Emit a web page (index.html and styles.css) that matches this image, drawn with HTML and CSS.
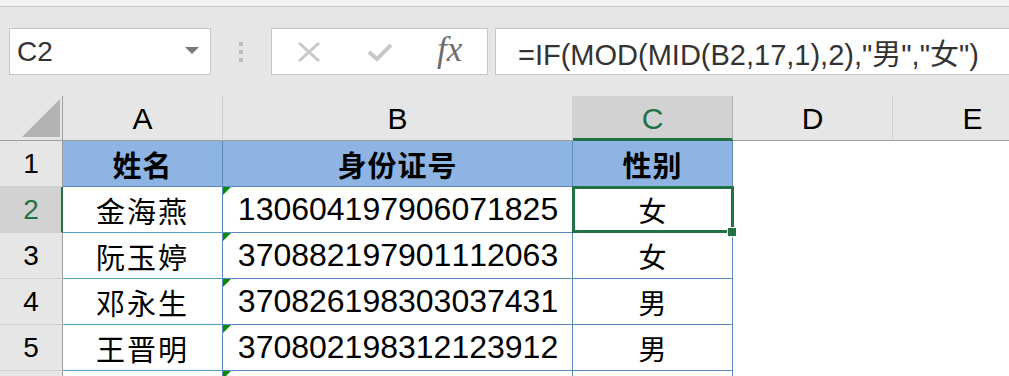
FILE: index.html
```html
<!DOCTYPE html>
<html lang="zh-CN">
<head>
  <meta charset="UTF-8" />
  <title>身份证号判断性别</title>
  <link rel="stylesheet" href="styles.css">
</head>
<body>

  <div class="top-strip"></div>

  <div class="formula-bar">
    <div class="name-box">
      <span>C2</span>
      <span class="caret"></span>
    </div>
    <div class="grip">
      <span></span>
      <span></span>
      <span></span>
    </div>
    <div class="buttons">
      <svg class="btn-icon" width="24" height="20" viewBox="0 0 24 20">
        <path d="M2 1 L22 19 M22 1 L2 19" stroke="#c8c8c8" stroke-width="3" fill="none"/>
      </svg>
      <svg class="btn-icon" width="26" height="20" viewBox="0 0 26 20">
        <path d="M2 10 L10 17 L24 3" stroke="#c8c8c8" stroke-width="4" fill="none"/>
      </svg>
      <span class="fx">fx</span>
    </div>
    <div class="formula-input">=IF(MOD(MID(B2,17,1),2),"男","女")</div>
  </div>

  <div class="sheet">
    <!-- column headers -->
    <div class="corner"><span class="corner-tri"></span></div>
    <div class="col-head">A</div>
    <div class="col-head">B</div>
    <div class="col-head active">C</div>
    <div class="col-head">D</div>
    <div class="col-head">E</div>

    <!-- row 1 -->
    <div class="row-head">1</div>
    <div class="cell title">姓名</div>
    <div class="cell title">身份证号</div>
    <div class="cell title">性别</div>
    <div class="blank"></div>
    <div class="blank"></div>

    <!-- row 2 -->
    <div class="row-head active">2</div>
    <div class="cell name">金海燕</div>
    <div class="cell id">130604197906071825</div>
    <div class="cell sex selected">女</div>
    <div class="blank"></div>
    <div class="blank"></div>

    <!-- row 3 -->
    <div class="row-head">3</div>
    <div class="cell name">阮玉婷</div>
    <div class="cell id">370882197901112063</div>
    <div class="cell sex">女</div>
    <div class="blank"></div>
    <div class="blank"></div>

    <!-- row 4 -->
    <div class="row-head">4</div>
    <div class="cell name">邓永生</div>
    <div class="cell id">370826198303037431</div>
    <div class="cell sex">男</div>
    <div class="blank"></div>
    <div class="blank"></div>

    <!-- row 5 -->
    <div class="row-head">5</div>
    <div class="cell name">王晋明</div>
    <div class="cell id">370802198312123912</div>
    <div class="cell sex">男</div>
    <div class="blank"></div>
    <div class="blank"></div>

    <!-- row 6, only its top edge shows -->
    <div class="row-head"></div>
    <div class="cell name"></div>
    <div class="cell id"></div>
    <div class="cell sex"></div>
    <div class="blank"></div>
    <div class="blank"></div>
  </div>

</body>
</html>
```

FILE: styles.css
```css
* {
  margin: 0;
  padding: 0;
  box-sizing: border-box;
}

body {
  width: 1009px;
  height: 376px;
  overflow: hidden;
  background: #ffffff;
  font-family: "Liberation Sans", Arial, "Noto Sans CJK SC", sans-serif;
  font-kerning: none;
}

.top-strip {
  height: 7px;
  background: #f3f3f3;
  border-bottom: 1px solid #c8c8c8;
}

/* formula bar */
.formula-bar {
  height: 89px;
  background: #e6e6e6;
  display: flex;
  align-items: flex-start;
  padding-top: 21px;
  padding-left: 9px;
  overflow: hidden;
}

.name-box {
  width: 202px;
  height: 47px;
  flex-shrink: 0;
  background: #fff;
  border: 1px solid #c6c6c6;
  display: flex;
  align-items: center;
  justify-content: space-between;
  padding: 0 11px 0 7px;
  font-size: 28px;
  color: #333;
}

.caret {
  width: 0;
  height: 0;
  border-left: 7px solid transparent;
  border-right: 7px solid transparent;
  border-top: 7px solid #7a7a7a;
  margin-top: -3px;
}

.grip {
  width: 60px;
  flex-shrink: 0;
  display: flex;
  flex-direction: column;
  align-items: center;
  gap: 4px;
  padding-top: 14px;
}

.grip span {
  width: 4px;
  height: 4px;
  background: #bdbdbd;
}

.buttons {
  width: 217px;
  height: 47px;
  flex-shrink: 0;
  background: #fff;
  border: 1px solid #c6c6c6;
  display: flex;
  align-items: center;
  padding-left: 25px;
  gap: 46px;
}

.fx {
  font-family: "Liberation Serif", "Times New Roman", serif;
  font-style: italic;
  font-size: 35px;
  color: #6d6d6d;
  margin-left: -2px;
  margin-top: -3px;
}

.formula-input {
  margin-left: 7px;
  width: 560px;
  height: 47px;
  flex-shrink: 0;
  background: #fff;
  border: 1px solid #c6c6c6;
  display: flex;
  align-items: center;
  padding-left: 22px;
  font-size: 29px;
  color: #333;
  white-space: nowrap;
}

/* sheet grid */
.sheet {
  display: grid;
  grid-template-columns: 63px 160px 350px 160px 160px 160px;
  grid-template-rows: 45px repeat(6, 46px);
  width: 1053px;
}

.corner {
  background: #e6e6e6;
  border-right: 1px solid #9e9e9e;
  border-bottom: 1px solid #9e9e9e;
  display: flex;
  align-items: flex-end;
  justify-content: flex-end;
  padding: 0 2px 3px 0;
}

.corner-tri {
  width: 38px;
  height: 38px;
  background: #b3b3b3;
  clip-path: polygon(100% 0, 100% 100%, 0 100%);
}

.col-head {
  background: #e6e6e6;
  border-right: 1px solid #d0d0d0;
  border-bottom: 1px solid #9e9e9e;
  display: flex;
  align-items: center;
  justify-content: center;
  font-size: 30px;
  color: #000;
  padding-top: 2px;
}

.col-head.active {
  background: #d2d2d2;
  color: #217346;
  border-bottom: 3px solid #217346;
  border-right-color: #b0b0b0;
  padding-top: 4px;
}

.row-head {
  background: #e6e6e6;
  border-right: 1px solid #9e9e9e;
  border-bottom: 1px solid #cfcfcf;
  display: flex;
  align-items: center;
  justify-content: center;
  font-size: 28px;
  color: #000;
}

.row-head.active {
  background: #d2d2d2;
  color: #217346;
  border-right: 2px solid #217346;
  padding-left: 1px;
}

.cell {
  position: relative;
  background: #fff;
  border-right: 1px solid #5b8ac0;
  border-bottom: 1px solid #5b8ac0;
  display: flex;
  align-items: center;
  justify-content: center;
  color: #000;
}

.cell.title {
  background: #8eb4e3;
  font-family: "Noto Sans CJK SC", sans-serif;
  font-weight: bold;
  font-size: 29px;
  letter-spacing: 1px;
}

.cell.name {
  font-family: "Noto Sans CJK SC", sans-serif;
  font-size: 29px;
  letter-spacing: 2px;
  border-bottom-color: #4fa0c4;
}

.cell.id {
  font-size: 32px;
  padding-left: 1px;
}

/* number-stored-as-text marker */
.cell.id::before {
  content: "";
  position: absolute;
  left: 0;
  top: 0;
  width: 8px;
  height: 8px;
  background: #0a8a0a;
  clip-path: polygon(0 0, 100% 0, 0 100%);
}

.cell.sex {
  font-family: "Noto Sans CJK SC", sans-serif;
  font-size: 28px;
}

/* active cell outline and fill handle */
.cell.selected::after {
  content: "";
  position: absolute;
  left: -1px;
  top: -1px;
  right: -2px;
  bottom: -1px;
  border: 3px solid #217346;
}

.cell.selected::before {
  content: "";
  position: absolute;
  right: -5px;
  bottom: -5px;
  width: 8px;
  height: 8px;
  background: #217346;
  border: 1px solid #fff;
  z-index: 2;
}

.blank {
  background: #fff;
}
```
